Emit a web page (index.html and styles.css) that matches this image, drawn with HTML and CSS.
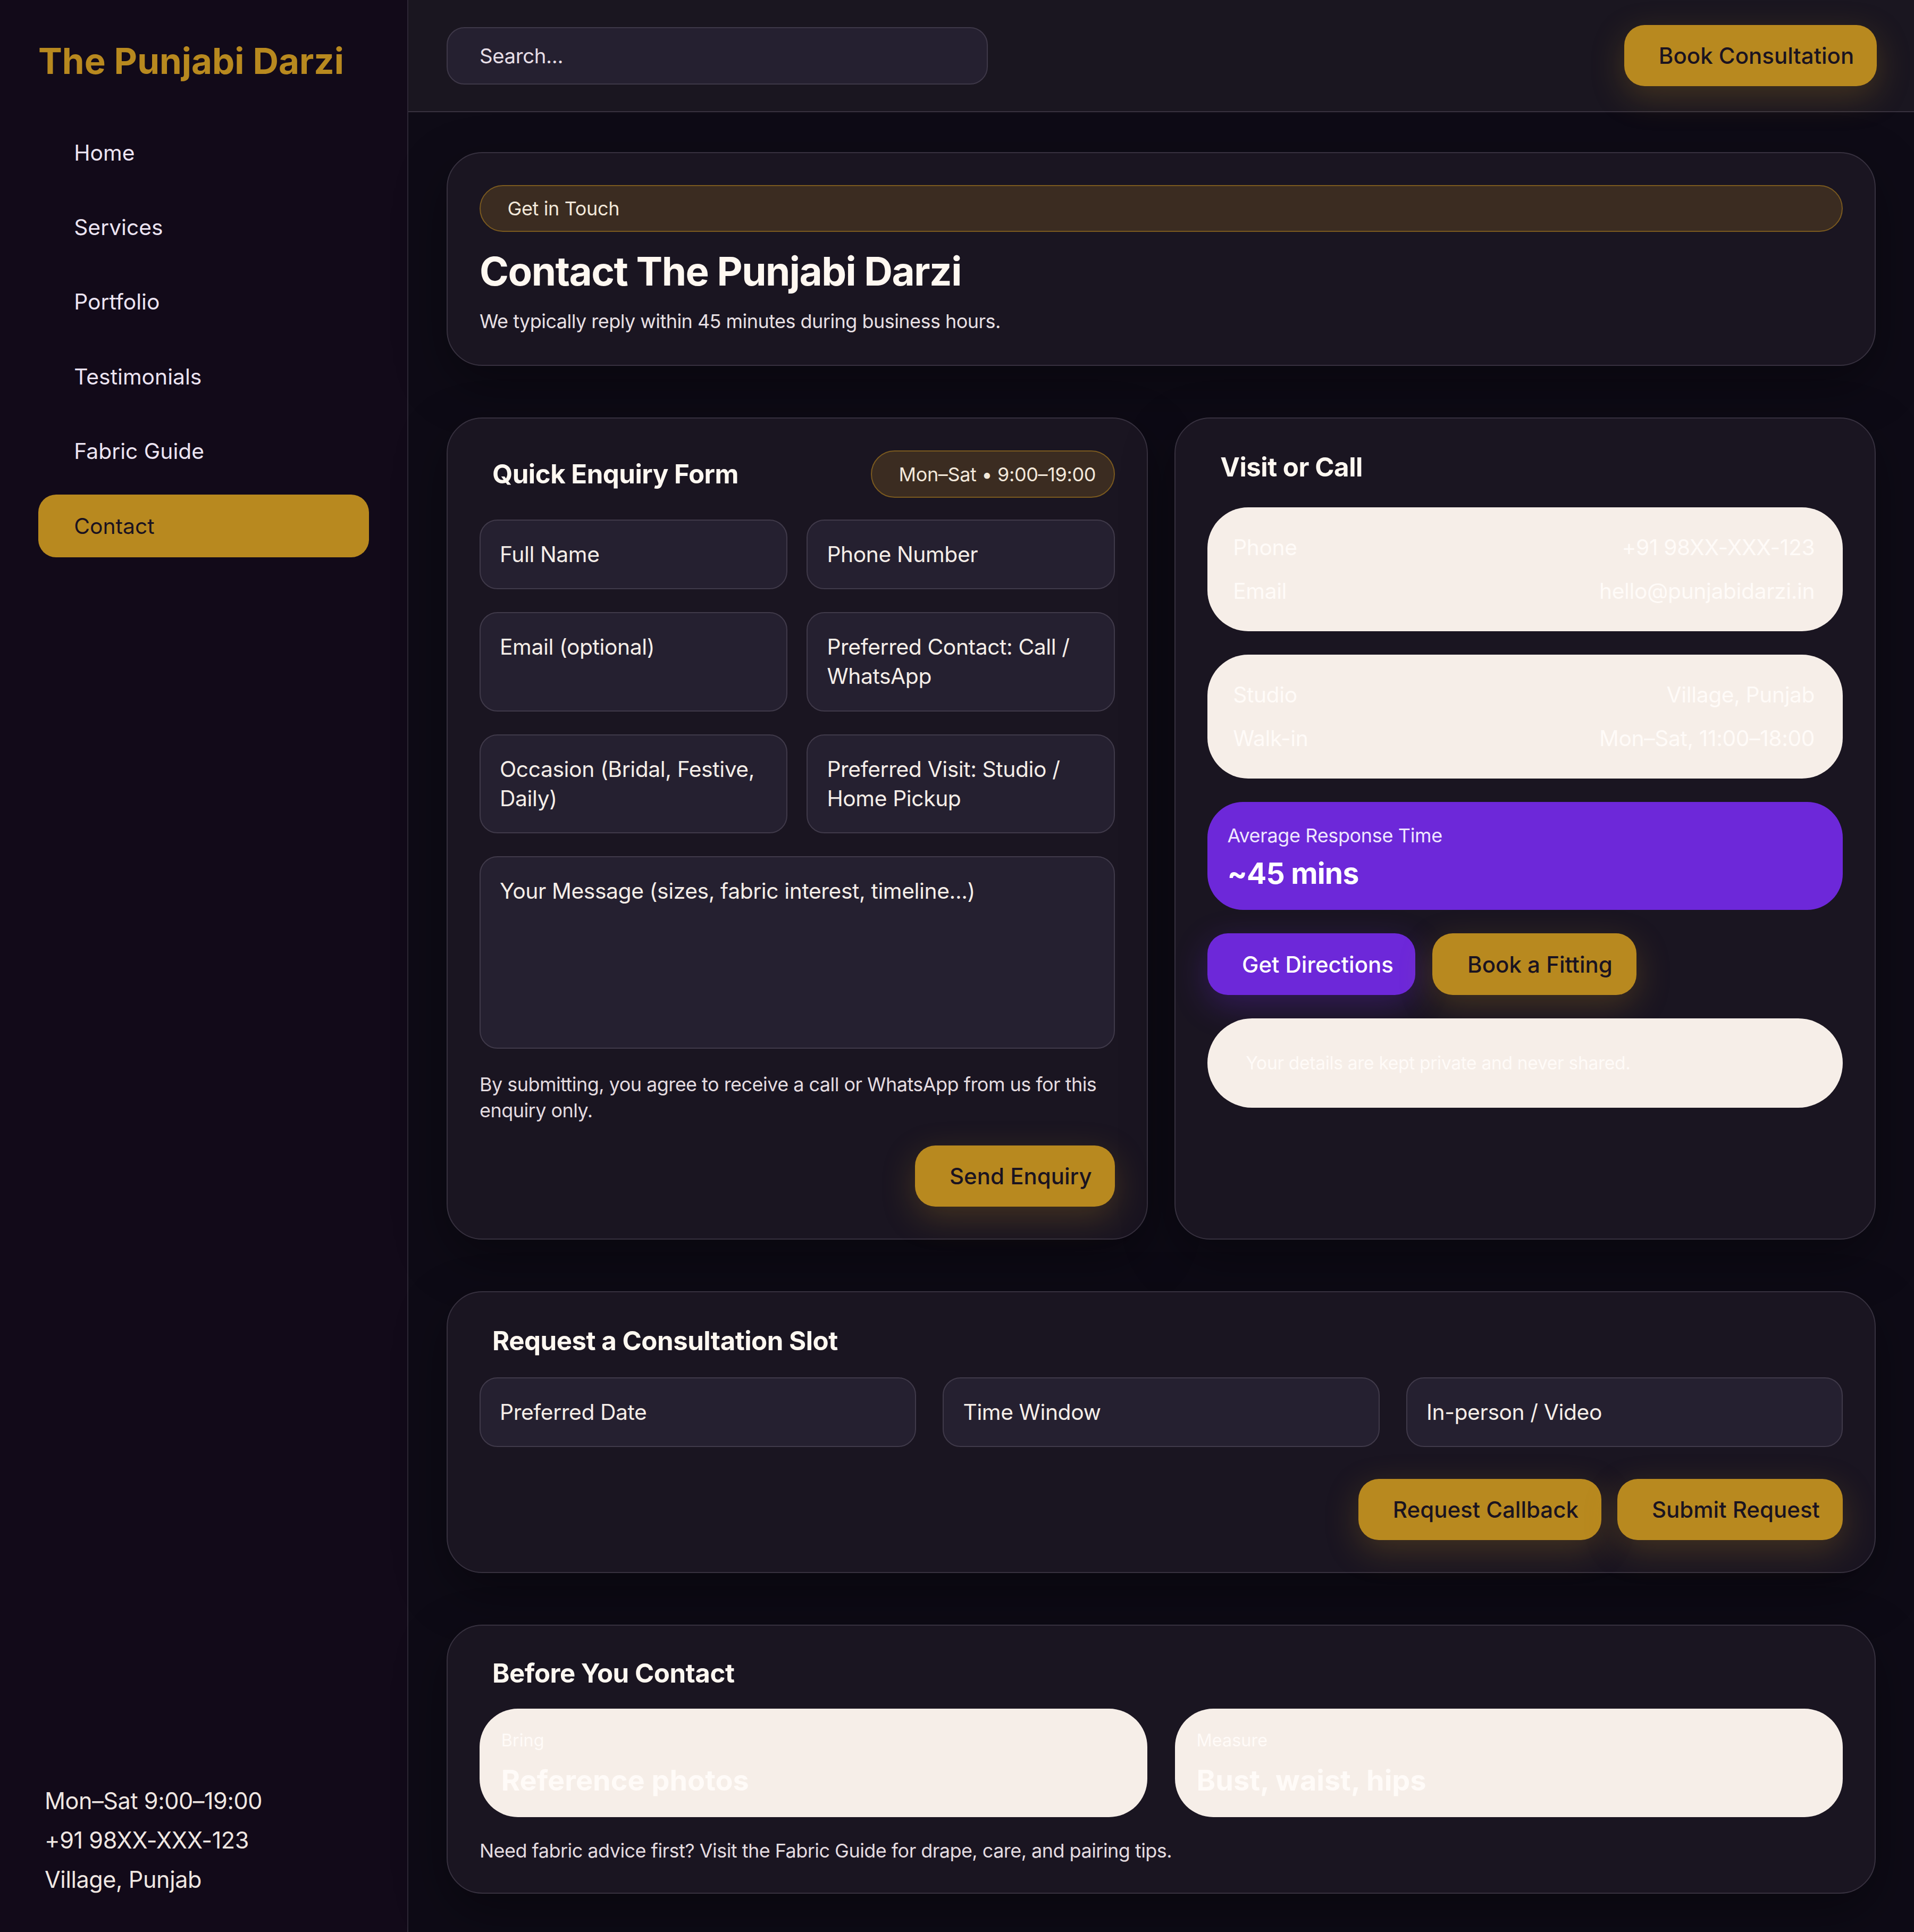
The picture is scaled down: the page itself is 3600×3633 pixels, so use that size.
FILE: index.html
```html
<!DOCTYPE html>
<html lang="en">
<head>
<meta charset="utf-8">
<title>Contact — The Punjabi Darzi</title>
<link rel="stylesheet" href="styles.css">
</head>
<body>
<div class="app">
  <aside class="sidebar">
    <div class="logo">The Punjabi Darzi</div>
    <nav class="nav">
      <a class="nav-item">Home</a>
      <a class="nav-item">Services</a>
      <a class="nav-item">Portfolio</a>
      <a class="nav-item">Testimonials</a>
      <a class="nav-item">Fabric Guide</a>
      <a class="nav-item active">Contact</a>
    </nav>
    <div class="side-footer">
      <div>Mon–Sat 9:00–19:00</div>
      <div>+91 98XX-XXX-123</div>
      <div>Village, Punjab</div>
    </div>
  </aside>
  <div class="main">
    <header class="topbar">
      <div class="search">Search...</div>
      <button class="btn btn-gold btn-top">Book Consultation</button>
    </header>
    <main class="content">
      <section class="card hero">
        <div class="pill pill-wide">Get in Touch</div>
        <h1 class="hero-title">Contact The Punjabi Darzi</h1>
        <p class="hero-sub">We typically reply within 45 minutes during business hours.</p>
      </section>

      <div class="row2">
        <section class="card form-card">
          <div class="card-head">
            <h2 class="card-title">Quick Enquiry Form</h2>
            <span class="pill">Mon–Sat • 9:00–19:00</span>
          </div>
          <div class="field-grid">
            <div class="field">Full Name</div>
            <div class="field">Phone Number</div>
            <div class="field">Email (optional)</div>
            <div class="field">Preferred Contact: Call / WhatsApp</div>
            <div class="field">Occasion (Bridal, Festive, Daily)</div>
            <div class="field">Preferred Visit: Studio / Home Pickup</div>
            <div class="field field-area">Your Message (sizes, fabric interest, timeline...)</div>
          </div>
          <p class="note">By submitting, you agree to receive a call or WhatsApp from us for this enquiry only.</p>
          <div class="actions">
            <button class="btn btn-gold btn-send">Send Enquiry</button>
          </div>
        </section>

        <section class="card visit-card">
          <h2 class="card-title">Visit or Call</h2>
          <div class="info-box">
            <div class="info-row"><span>Phone</span><span>+91 98XX-XXX-123</span></div>
            <div class="info-row"><span>Email</span><span>hello@punjabidarzi.in</span></div>
          </div>
          <div class="info-box">
            <div class="info-row"><span>Studio</span><span>Village, Punjab</span></div>
            <div class="info-row"><span>Walk-in</span><span>Mon–Sat, 11:00–18:00</span></div>
          </div>
          <div class="stat">
            <div class="stat-label">Average Response Time</div>
            <div class="stat-value">~45 mins</div>
          </div>
          <div class="btn-row">
            <button class="btn btn-purple btn-dir">Get Directions</button>
            <button class="btn btn-gold btn-fit">Book a Fitting</button>
          </div>
          <div class="privacy">Your details are kept private and never shared.</div>
        </section>
      </div>

      <section class="card slot-card">
        <h2 class="card-title">Request a Consultation Slot</h2>
        <div class="slot-grid">
          <div class="field">Preferred Date</div>
          <div class="field">Time Window</div>
          <div class="field">In-person / Video</div>
        </div>
        <div class="slot-actions">
          <button class="btn btn-gold btn-callback">Request Callback</button>
          <button class="btn btn-gold btn-submit">Submit Request</button>
        </div>
      </section>

      <section class="card before-card">
        <h2 class="card-title">Before You Contact</h2>
        <div class="tip-grid">
          <div class="tip">
            <div class="tip-label">Bring</div>
            <div class="tip-value">Reference photos</div>
          </div>
          <div class="tip">
            <div class="tip-label">Measure</div>
            <div class="tip-value">Bust, waist, hips</div>
          </div>
        </div>
        <p class="before-note">Need fabric advice first? Visit the Fabric Guide for drape, care, and pairing tips.</p>
      </section>
    </main>
  </div>
</div>
</body>
</html>
```
FILE: styles.css
```css
html {
  zoom: 2.4;
  background: #0e0b16;
}

body {
  margin: 0;
  font-family: Inter, "DejaVu Sans", sans-serif;
  color: #f3ece6;
  background: #0e0b16;
  -webkit-font-smoothing: antialiased;
}

.app {
  display: grid;
  grid-template-columns: 320px 1fr;
  min-height: 1514px;
}

/* Sidebar */
.sidebar {
  box-sizing: border-box;
  background: #120a19;
  border-right: 1px solid #2d2735;
  padding: 30px 30px 26.5px;
  display: flex;
  flex-direction: column;
}

.logo {
  font-size: 28px;
  line-height: 36px;
  font-weight: 700;
  color: #b8891f;
  letter-spacing: 0;
}

.nav {
  margin-top: 29px;
  display: flex;
  flex-direction: column;
  gap: 9.5px;
}

.nav-item {
  display: block;
  padding: 14px 28px;
  font-size: 17px;
  line-height: 21px;
  color: #ece4f2;
  border-radius: 14px;
  letter-spacing: 0;
}

.nav-item.active {
  background: #b8891f;
  color: #1a1220;
}

.side-footer {
  margin-top: auto;
  padding-left: 5px;
  font-size: 18px;
  line-height: 31px;
  color: #efe7e2;
  letter-spacing: -0.01em;
}

/* Main */
.main {
  min-width: 0;
  display: flex;
  flex-direction: column;
}

.topbar {
  box-sizing: border-box;
  height: 88px;
  background: #1a1620;
  border-bottom: 1px solid #38323f;
  padding: 0 29px 0 30px;
  display: flex;
  align-items: center;
  justify-content: space-between;
}

.search {
  box-sizing: border-box;
  width: 424px;
  height: 45px;
  background: #252030;
  border: 1px solid #3e3848;
  border-radius: 14px;
  padding: 0 25px;
  display: flex;
  align-items: center;
  font-size: 16px;
  color: #e6dee6;
  letter-spacing: -0.01em;
}

.btn {
  height: 48px;
  border: none;
  border-radius: 16px;
  padding: 0 18px 0 27px;
  font-family: inherit;
  font-size: 17.5px;
  font-weight: 500;
  letter-spacing: 0;
  white-space: nowrap;
  cursor: pointer;
}

.btn-gold {
  background: #b8891f;
  color: #1a1320;
  box-shadow: 0 8px 26px rgba(184, 137, 31, 0.26);
}

.btn-purple {
  background: #6d28d9;
  color: #ffffff;
  box-shadow: 0 8px 26px rgba(109, 40, 217, 0.3);
}

.content {
  padding: 31px 30px 31px;
  display: flex;
  flex-direction: column;
  gap: 40.5px;
}

.card {
  background: #1a1521;
  border: 1px solid #37313f;
  border-radius: 28px;
  padding: 25px;
  box-shadow: 0 14px 40px rgba(0, 0, 0, 0.35);
}

.pill {
  box-sizing: border-box;
  display: inline-flex;
  align-items: center;
  height: 37px;
  padding: 0 14px 0 21px;
  border-radius: 999px;
  background: #3b2c21;
  border: 1px solid #7b5a1f;
  font-size: 15px;
  color: #f2e8da;
  letter-spacing: -0.01em;
}

/* Hero */
.hero {
  padding: 25px 25px 23px;
}

.pill-wide {
  display: flex;
  height: 37px;
}

.hero-title {
  margin: 12px 0 0;
  font-size: 31px;
  line-height: 38px;
  font-weight: 700;
  color: #fff8f1;
  letter-spacing: -0.02em;
}

.hero-sub {
  margin: 9px 0 0;
  font-size: 15px;
  line-height: 22px;
  color: #e8e0e4;
  letter-spacing: -0.015em;
}

/* Row of two cards */
.row2 {
  display: grid;
  grid-template-columns: 1fr 1fr;
  gap: 21px;
}

.card-title {
  margin: 0;
  padding-left: 10px;
  font-size: 20.5px;
  line-height: 26px;
  font-weight: 700;
  color: #fff8f1;
  letter-spacing: -0.01em;
}

.card-head {
  display: flex;
  align-items: center;
  justify-content: space-between;
}

.field-grid {
  margin-top: 17px;
  display: grid;
  grid-template-columns: 1fr 1fr;
  gap: 18px 15px;
}

.field {
  background: #252030;
  border: 1px solid #403a4a;
  border-radius: 14px;
  padding: 15px;
  font-size: 17px;
  line-height: 23px;
  color: #f5eee8;
  letter-spacing: -0.01em;
}

.field-area {
  grid-column: 1 / -1;
  box-sizing: border-box;
  height: 150.5px;
}

.note {
  margin: 18px 0 0;
  font-size: 15px;
  line-height: 20.5px;
  color: #e4dce0;
  letter-spacing: -0.015em;
}

.actions {
  margin-top: 17px;
  display: flex;
  justify-content: flex-end;
}

/* Visit card */
.visit-card {
  display: flex;
  flex-direction: column;
  gap: 18.5px;
}

.info-box {
  background: #f6eee8;
  border-radius: 32px;
  padding: 20px 22px 20px 20px;
  display: flex;
  flex-direction: column;
  gap: 11px;
}

.info-row {
  display: flex;
  justify-content: space-between;
  font-size: 17px;
  line-height: 23px;
  color: #fffbf8;
  letter-spacing: -0.01em;
}

.stat {
  background: #6d28d9;
  border-radius: 28px;
  padding: 16px 16px 14.5px 15.5px;
}

.stat-label {
  font-size: 15px;
  line-height: 20px;
  color: #efe6ff;
  letter-spacing: -0.01em;
}

.stat-value {
  margin-top: 6px;
  font-size: 23px;
  line-height: 28px;
  font-weight: 700;
  color: #ffffff;
  letter-spacing: -0.015em;
}

.btn-row {
  display: flex;
  gap: 13.5px;
}

.btn-dir {
  padding: 0 17px 0 27px;
}

.btn-fit {
  padding: 0 19px 0 27.5px;
}

.privacy {
  background: #f6eee8;
  border-radius: 36px;
  padding: 25px 30px;
  font-size: 14px;
  line-height: 20px;
  color: #fffbf8;
  letter-spacing: -0.01em;
}

/* Slot card */
.slot-grid {
  margin-top: 15.5px;
  display: grid;
  grid-template-columns: repeat(3, 1fr);
  gap: 21px;
}

.slot-grid .field {
  padding: 15px;
}

.slot-actions {
  margin-top: 25px;
  display: flex;
  justify-content: flex-end;
  gap: 12.5px;
}

/* Before card */
.before-card {
  padding: 24px 25px 22.5px;
}

.tip-grid {
  margin-top: 15px;
  display: grid;
  grid-template-columns: 1fr 1fr;
  gap: 21.5px;
}

.tip {
  background: #f6eee8;
  border-radius: 30px;
  padding: 17px 17px 15px;
  color: #fffbf8;
}

.tip-label {
  font-size: 13.5px;
  line-height: 16px;
}

.tip-value {
  margin-top: 9px;
  font-size: 22.5px;
  line-height: 28px;
  font-weight: 700;
  letter-spacing: 0;
}

.before-note {
  margin: 15.5px 0 0;
  font-size: 15px;
  line-height: 21px;
  color: #e4dce0;
  letter-spacing: -0.015em;
}
```
